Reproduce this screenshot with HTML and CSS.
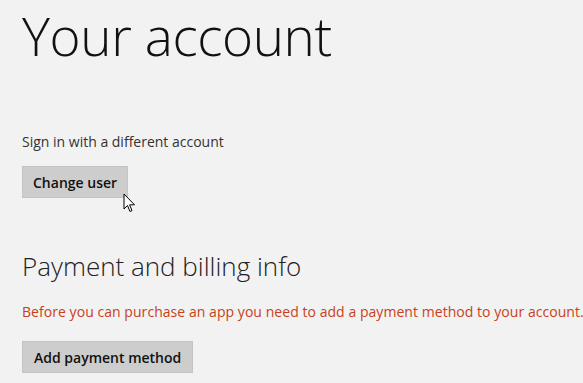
FILE: index.html
```html
<!DOCTYPE html>
<html lang="en">
<head>
    <meta charset="UTF-8">
    <title>Your account</title>
    <link rel="stylesheet" href="styles.css">
</head>
<body>
    <div class="page">
        <h1 class="page-title">Your account</h1>
        <div class="section">
            <p class="label">Sign in with a different account</p>
            <div class="btn-wrap">
                <button class="btn">Change user</button>
                <svg class="cursor" width="14" height="22" viewBox="0 0 14 22">
                    <path d="M1 1 L1 16 L4.5 12.5 L7 18.5 L9 17.6 L6.6 11.8 L11.5 11.8 Z" fill="#fff" stroke="#000" stroke-width="1" stroke-linejoin="miter"/>
                </svg>
            </div>
        </div>
        <div class="section billing">
            <h2 class="section-title">Payment and billing info</h2>
            <p class="warning">Before you can purchase an app you need to add a payment method to your account.</p>
            <button class="btn">Add payment method</button>
        </div>
    </div>
</body>
</html>
```

FILE: styles.css
```css
body {
    margin: 0;
    padding: 0;
    background-color: #f2f2f2;
    font-family: "Open Sans", "Noto Sans", sans-serif;
    overflow: hidden;
}
.page {
    padding: 0 0 0 22px;
    white-space: nowrap;
}
.page-title {
    margin: 0;
    font-size: 53px;
    font-weight: 300;
    line-height: 72px;
    color: #111;
    letter-spacing: -0.4px;
}
.section {
    margin-top: 60px;
}
.label {
    margin: 0;
    font-size: 14px;
    line-height: 20px;
    color: #333;
}
.btn-wrap {
    position: relative;
    display: inline-block;
    margin-top: 14px;
}
.btn {
    font-family: inherit;
    font-size: 14px;
    font-weight: 600;
    color: #111;
    background-color: #cdcdcd;
    border: 1px solid #c4c4c4;
    padding: 0 10px;
    height: 32px;
    margin: 0;
}
.cursor {
    position: absolute;
    left: 101px;
    top: 27px;
}
.billing {
    margin-top: 50px;
}
.section-title {
    margin: 0;
    font-size: 26px;
    font-weight: 300;
    line-height: 36px;
    color: #222;
}
.warning {
    margin: 18px 0 19px;
    font-size: 14px;
    line-height: 20px;
    color: #c8411b;
    letter-spacing: 0.05px;
}
.billing .btn {
    padding: 0 11px;
}
```
